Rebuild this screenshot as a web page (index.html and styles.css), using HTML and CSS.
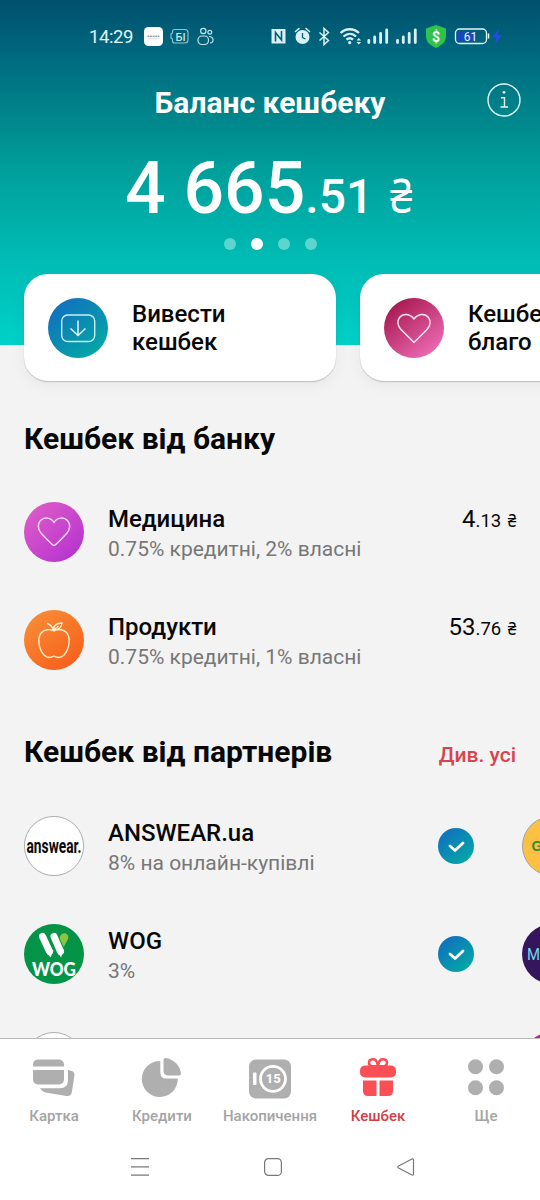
FILE: index.html
```html
<!DOCTYPE html>
<html lang="uk">
<head>
<meta charset="utf-8">
<title>Баланс кешбеку</title>
<link rel="stylesheet" href="styles.css">
</head>
<body>
<div class="app">
  <header class="hero">
    <div class="status">
      <span class="clock">14:29</span>
      <svg class="status-left" width="76" height="24" viewBox="144 24 76 24" fill="none">
        <rect x="144" y="27" width="19" height="19" rx="4.500" fill="#fff"/>
        <path d="M147.500 36.200h12" stroke="#678" stroke-width="1.100" stroke-dasharray="2 .6"/>
        <path d="M148 38.700h11" stroke="#bcc" stroke-width=".6"/>
        <path d="M174.500 29.500h10.500a3 3 0 0 1 3 3v7.500a3 3 0 0 1-3 3h-10.500a2 2 0 0 1-2-2v-2l-1.500-1v-4l1.500-1v-1.500a2 2 0 0 1 2-2z" stroke="#8fc3d4" stroke-width="1.100"/>
        <text x="175.500" y="40.700" class="mini">БІ</text>
        <g stroke="#c5e3ec" stroke-width="1.200"><circle cx="203.300" cy="31" r="2.700"/><circle cx="209.800" cy="32.300" r="1.900"/><rect x="198" y="36" width="10.500" height="8.500" rx="4"/><path d="M209 36.500c5 0 5.500 6 1 6.500"/></g>
      </svg>
      <svg class="status-right" width="234" height="28" viewBox="270 22 234 28" fill="none">
        <path d="M271.500 29h14v14.500h-14z" fill="#d9f1f6"/>
        <path d="M275.500 41.500v-9l6 7.500v-9" stroke="#005f78" stroke-width="1.600"/>
        <circle cx="302.500" cy="37" r="7" fill="#d9f1f6"/><path d="M295.500 31.500l3.500-3M309.500 31.500l-3.500-3" stroke="#d9f1f6" stroke-width="1.600" stroke-linecap="round"/><path d="M302.500 33v4.500l3 1.500" stroke="#005f78" stroke-width="1.300"/>
        <path d="M319.500 32.500l9 8-4.500 4v-16l4.500 4-9 8" stroke="#d9f1f6" stroke-width="1.500"/>
        <g stroke="#d9f1f6" stroke-width="2.300"><path d="M340.500 33c5.500-5 13-5 18.500 0M343.500 36.500c4-3.500 9-3.500 12.500 0M346.500 39.700c2-1.800 4.500-1.800 6.500 0"/></g><circle cx="349.700" cy="42.700" r="1.600" fill="#d9f1f6"/><path d="M356.500 40.500l2.300-2.500 2.300 2.500zM356.500 42l2.300 2.500 2.300-2.500z" fill="#d9f1f6"/>
        <g stroke="#d9f1f6" stroke-width="2.800" stroke-linecap="round"><path d="M368.800 40.500v2M374.700 37v5.500M380.600 33.500v9M386.700 30v12.500M397.500 40.500v2M403.300 37v5.500M409.200 33.500v9M415.300 30v12.500"/></g>
        <path d="M436 25l10 3.500v8c0 5-4 9-10 11.500c-6-2.500-10-6.500-10-11.500v-8z" fill="#2fc34d"/>
        <text x="436" y="41.500" class="shield">$</text>
        <rect x="455.500" y="29" width="31" height="14.500" rx="4" stroke="#e3f4f7" stroke-width="1.300"/><rect x="457.500" y="31" width="17" height="10.500" rx="2" fill="#1647be"/><path d="M488.500 33.500v5" stroke="#e3f4f7" stroke-width="1.500"/>
        <text x="470.500" y="40.700" class="battery">61</text>
        <path d="M499 28.500l-7 9h4.500l-1.500 6.500 7-9h-4.500z" fill="#2948e8"/>
      </svg>
    </div>
    <div class="title-bar">
      <h1>Баланс кешбеку</h1>
      <svg class="info" width="34" height="34" viewBox="0 0 34 34" fill="none" stroke="#e4f8fa" stroke-width="1.400"><circle cx="17" cy="17" r="16"/><path d="M14 14.800h3.500v9M13.500 24h7.500"/><circle cx="17" cy="9.300" r="1.400" fill="#e4f8fa" stroke="none"/></svg>
    </div>
    <div class="balance"><span class="whole">4 665</span><span class="cents">.51</span><span class="currency">₴</span></div>
    <div class="dots"><i></i><i class="on"></i><i></i><i></i></div>
  </header>

  <main class="content">
    <section class="cards">
      <article class="card">
        <svg width="60" height="60" viewBox="0 0 60 60" fill="none"><defs><linearGradient id="blue" x1=".1" y1=".1" x2=".8" y2=".9"><stop stop-color="#116fbf"/><stop offset="1" stop-color="#04a6a6"/></linearGradient></defs><circle cx="30" cy="30" r="30" fill="url(#blue)"/><rect x="13.700" y="17" width="33" height="26.500" rx="6" stroke="#c9eef7" stroke-width="1.400"/><path d="M30 22.500v14.500M22.500 30.500l7.500 7 7.500-7" stroke="#e2f8fb" stroke-width="1.500"/></svg>
        <p>Вивести<br>кешбек</p>
      </article>
      <article class="card">
        <svg width="60" height="60" viewBox="0 0 60 60" fill="none"><defs><linearGradient id="rose" x1=".15" y1=".1" x2=".8" y2=".9"><stop stop-color="#a81950"/><stop offset="1" stop-color="#ea68b0"/></linearGradient></defs><circle cx="30" cy="30" r="30" fill="url(#rose)"/><path d="M30 44.500L17 31.500C13.500 28 13 23 15.500 19.500C19 15 26 15.500 30 21C34 15.500 41 15 44.500 19.500C47 23 46.500 28 43 31.500Z" stroke="#ffe5f2" stroke-width="1.500" stroke-linejoin="round"/></svg>
        <p>Кешбе<br>благо</p>
      </article>
    </section>

    <section class="bank">
      <h2>Кешбек від банку</h2>
      <div class="row">
        <svg width="60" height="60" viewBox="0 0 60 60" fill="none"><defs><linearGradient id="violet" x1=".1" y1=".1" x2=".85" y2=".9"><stop stop-color="#dd5bc8"/><stop offset="1" stop-color="#b735d0"/></linearGradient></defs><circle cx="30" cy="30" r="30" fill="url(#violet)"/><path d="M30 43.500Q28.500 43.500 17 31C13.500 27 13.500 21.500 16.500 18.500C20.500 14.500 27 15.500 30 20.500C33 15.500 39.500 14.500 43.500 18.500C46.500 21.500 46.500 27 43 31Q31.500 43.500 30 43.500Z" stroke="#fbdcff" stroke-width="1.400"/></svg>
        <div class="desc"><h3>Медицина</h3><p>0.75% кредитні, 2% власні</p></div>
        <div class="sum"><b>4</b>.13 <span class="uah">₴</span></div>
      </div>
      <div class="row">
        <svg width="60" height="60" viewBox="0 0 60 60" fill="none"><defs><linearGradient id="orange" x1=".15" y1=".05" x2=".8" y2=".95"><stop stop-color="#f98c35"/><stop offset="1" stop-color="#f6601b"/></linearGradient></defs><circle cx="30" cy="30" r="30" fill="url(#orange)"/><path d="M30 21C26.500 19 20.500 19 17.500 22.500C13 27.500 14.500 39 20 45C23.500 48.500 26.500 48 30 46C33.500 48 36.500 48.500 40 45C45.500 39 47 27.500 42.500 22.500C39.500 19 33.500 19 30 21ZM29.500 20.500C28.500 17 26 14.500 23.500 13.500M29.500 20C29.500 14.500 33 13 38 13C37.500 18 35 20 29.500 20ZM29.500 20L34 16.500" stroke="#fff0cc" stroke-width="1.400" stroke-linejoin="round" stroke-linecap="round"/></svg>
        <div class="desc"><h3>Продукти</h3><p>0.75% кредитні, 1% власні</p></div>
        <div class="sum"><b>53</b>.76 <span class="uah">₴</span></div>
      </div>
    </section>

    <section class="partners">
      <div class="heading"><h2>Кешбек від партнерів</h2><a class="all">Див. усі</a></div>
      <div class="partner">
        <svg width="60" height="60" viewBox="0 0 60 60"><circle cx="30" cy="30" r="29.600" fill="#fff" stroke="#999" stroke-width=".8"/><text x="2.500" y="36.800" class="answear" textLength="55" lengthAdjust="spacingAndGlyphs">answear.</text></svg>
        <div class="desc"><h3>ANSWEAR.ua</h3><p>8% на онлайн-купівлі</p></div>
        <svg class="check" width="36" height="36" viewBox="0 0 36 36" fill="none"><circle cx="18" cy="18" r="18" fill="url(#blue)"/><path d="M12 18l5 4.500 8-7.500" stroke="#fff" stroke-width="2.800" stroke-linecap="round" stroke-linejoin="round"/></svg>
        <svg class="next" width="60" height="60" viewBox="0 0 60 60"><circle cx="30" cy="30" r="29.500" fill="#fcc043" stroke="#a3a3a3"/><text x="9.500" y="34.500" class="g-logo">G</text></svg>
      </div>
      <div class="partner">
        <svg width="60" height="60" viewBox="0 0 60 60"><circle cx="30" cy="30" r="30" fill="#049447"/><path d="M18.500 12.500l7 15M30 12.500l6.500 15" stroke="#fff" stroke-width="7" stroke-linecap="round"/><path d="M21 25l5.500 8.500 3-7zM32 25l5 8.500 3-8z" fill="#fff"/><path d="M38 10c3.500-2 7.500 1 6 5l-4.300 8-3.500-7.500c-1-2.500 0-4.500 1.800-5.500z" fill="#8ac63f"/><text x="30" y="51.500" class="wog" textLength="44" lengthAdjust="spacingAndGlyphs">WOG</text></svg>
        <div class="desc"><h3>WOG</h3><p>3%</p></div>
        <svg class="check" width="36" height="36" viewBox="0 0 36 36" fill="none"><circle cx="18" cy="18" r="18" fill="url(#blue)"/><path d="M12 18l5 4.500 8-7.500" stroke="#fff" stroke-width="2.800" stroke-linecap="round" stroke-linejoin="round"/></svg>
        <svg class="next" width="60" height="60" viewBox="0 0 60 60"><circle cx="30" cy="30" r="30" fill="#35165c"/><text x="5" y="36" class="m-logo" textLength="13" lengthAdjust="spacingAndGlyphs">M</text></svg>
      </div>
      <div class="partner">
        <svg width="60" height="60" viewBox="0 0 60 60"><circle cx="30" cy="30" r="29.500" fill="#fff" stroke="#999" stroke-width=".8"/></svg>
        <div class="desc"></div>
        <svg class="next" width="60" height="60" viewBox="0 0 60 60"><circle cx="30" cy="30" r="30" fill="#d914a5"/></svg>
      </div>
    </section>
  </main>

  <nav class="tabs">
    <a><svg width="44" height="44" viewBox="-1 0 44 44" fill="#afafaf"><path d="M6 1.500h20a5 5 0 0 1 5 5v2H0v-2a5 5 0 0 1 6-5zM0 12h31v9.500a5 5 0 0 1-5 5H5a5 5 0 0 1-5-5zM35 12l3 .7q4 .8 3.400 5l-2.500 16q-.8 5-5.500 4.300l-18-3q-6-.8-8.500-4.800H27q8 0 8-8z"/></svg>Картка</a>
    <a><svg width="44" height="44" viewBox="0 0 44 44" fill="#afafaf"><path d="M20.300 3v11.500q0 6 6 6h11.500a18 18 0 1 1-17.500-17.500z"/><path d="M23.500 2q0-2 2-2a18 18 0 0 1 15.500 15.500q0 2-2 2H28.500q-5 0-5-5z"/></svg>Кредити</a>
    <a><svg width="44" height="44" viewBox="0 0 44 44"><rect x="1" y="1.500" width="42" height="39" rx="7" fill="#afafaf"/><rect x="5" y="14.500" width="3.500" height="12.500" rx="1" fill="#fff"/><circle cx="25" cy="20.800" r="12.500" fill="none" stroke="#fff" stroke-width="2.800"/><text x="25.200" y="25" class="coin">15</text></svg>Накопичення</a>
    <a class="active"><svg width="44" height="44" viewBox="0 0 44 44" fill="#f94f55"><rect x="4" y="7.500" width="36" height="12" rx="5"/><path d="M7 22.500h13.500v15.500H12q-5 0-5-5zM23.500 22.500H37v10.500q0 5-5 5h-8.500z"/><g fill="#fff" stroke="#f94f55" stroke-width="2.500"><path d="M22 8C20 8 13 10 13 4.800C13 .2 20 0 21 4.500zM22 8C24 8 31 10 31 4.800C31 .2 24 0 23 4.500z"/></g></svg>Кешбек</a>
    <a><svg width="44" height="44" viewBox="0 0 44 44" fill="#afafaf"><circle cx="11.500" cy="8.700" r="7.500"/><circle cx="32.500" cy="8.700" r="7.500"/><circle cx="11.500" cy="29.700" r="7.500"/><circle cx="32.500" cy="29.700" r="7.500"/></svg>Ще</a>
  </nav>
  <footer class="system">
    <svg width="18" height="18" viewBox="0 0 18 18"><path d="M0 .7h18M0 8.900h18M0 17.100h18"/></svg>
    <svg width="18" height="18" viewBox="0 0 18 18"><rect x=".6" y=".6" width="16.800" height="16.800" rx="4"/></svg>
    <svg width="18" height="18" viewBox="0 0 18 18"><path d="M1.500 8L14.500 1.200q2-1 2 1v13.600q0 2-2 1L1.500 10q-1.500-1 0-2z"/></svg>
  </footer>
</div>
</body>
</html>
```
FILE: styles.css
```css
* { box-sizing: border-box; }
body { margin: 0; font-family: Roboto, "Noto Sans", sans-serif; color: #080808; background: #fff; }
h1, h2, h3, p { margin: 0; }
svg { display: block; flex: none; }
.app { width: 540px; height: 1200px; display: flex; flex-direction: column; overflow: hidden; }

.hero { height: 345px; flex: none; color: #fff; background: linear-gradient(#00506d 0, #006a80 58px, #00858b 115px, #009f9b 170px, #00bcb5 260px, #00d1c8 345px); }
.status { height: 72px; display: flex; align-items: center; padding: 0 36px 0 89px; }
.clock { width: 55px; font-size: 18.5px; line-height: 24px; padding-top: 1px; color: #e3f4f8; white-space: nowrap; letter-spacing: -.4px; }
.status-right { margin-left: auto; }
.mini { font: 500 11px Roboto, sans-serif; fill: #c5e3ec; }
.shield { font: 700 14px Roboto, sans-serif; fill: #fff; text-anchor: middle; }
.battery { font: 400 12px Roboto, sans-serif; fill: #eef8fa; text-anchor: middle; }
.title-bar { height: 58px; display: grid; grid-template-columns: 540px; position: relative; }
.title-bar h1 { font-size: 30px; line-height: 36px; padding-top: 13px; text-align: center; font-weight: 700; }
.info { position: absolute; right: 19px; top: 11px; }
.balance { height: 104px; padding: 17px 0 0 125px; line-height: 84px; white-space: nowrap; font-weight: 500; }
.whole { font-size: 71.5px; }
.cents { font-size: 48px; }
.currency, .uah { display: inline-block; line-height: 1; font-weight: 400; transform: scaleX(.84); transform-origin: left; }
.currency { font-size: 48px; margin-left: 17px; }
.uah { transform-origin: right; }
.dots { display: flex; gap: 15px; padding: 3.500px 0 0 223.500px; }
.dots i { width: 12px; height: 12px; border-radius: 50%; background: #5dd5cf; }
.dots .on { background: #fff; }

.content { flex: none; height: 693px; background: #f3f3f3; }
.cards { display: flex; gap: 24px; padding-left: 24px; margin-top: -71px; height: 107px; }
.card { flex: none; width: 312px; height: 107px; display: flex; align-items: center; gap: 24px; padding: 0 24px; border-radius: 24px; background: #fff; box-shadow: 0 1px 1px rgba(0,0,0,.2), 0 4px 16px rgba(0,0,0,.05); }
.card p { font-size: 24px; line-height: 28.500px; padding-top: 1px; font-weight: 500; white-space: nowrap; }
h2 { font-size: 30px; line-height: 36px; font-weight: 700; white-space: nowrap; }
.bank { padding: 40px 24px 0; }
.row { display: flex; height: 60px; gap: 24px; }
.row + .row { margin-top: 48px; }
.bank h2 { margin-bottom: 44.500px; }
.desc { flex: 1; padding-top: 2px; }
h3 { font-size: 24px; line-height: 30px; font-weight: 500; }
.desc p { font-size: 21px; line-height: 31px; color: #777; white-space: nowrap; }
.sum { font-size: 18.500px; line-height: 30px; padding-top: 2px; white-space: nowrap; }
.sum b { font-size: 24px; font-weight: 400; }
.partners { padding: 64px 0 0 24px; }
.heading { display: flex; justify-content: space-between; padding-right: 24px; margin-bottom: 46px; }
.all { font-size: 21px; line-height: 43px; height: 36px; font-weight: 500; color: #d8444b; }
.partner { display: flex; height: 60px; gap: 24px; margin-bottom: 48px; }
.check { margin: 12px 24px 0 0; }
.next { margin-right: -42px; }
.g-logo { font: 700 14px "Liberation Sans", sans-serif; fill: #398b32; }
.answear { font: 700 21px Roboto, sans-serif; fill: #0b0b0b; }
.wog { font: 900 18px Lato, sans-serif; fill: #fff; text-anchor: middle; }
.m-logo { font: 400 17px Roboto, sans-serif; fill: #72d8eb; }

.tabs { flex: none; height: 97px; background: #fff; border-top: 1px solid #bababa; display: grid; grid-template-columns: repeat(5, 1fr); padding-top: 19px; }
.tabs a { display: flex; flex-direction: column; align-items: center; gap: 4px; font-size: 15px; line-height: 21px; font-weight: 500; color: #a4a4a4; }
.tabs .active { color: #d33d43; }
.coin { font: 700 13px Roboto, sans-serif; fill: #fff; text-anchor: middle; }
.system { height: 65px; display: flex; justify-content: space-between; padding: 23px 125px 0 131px; background: #fff; }
.system svg { fill: none; stroke: #777; stroke-width: 1.2; }
```
